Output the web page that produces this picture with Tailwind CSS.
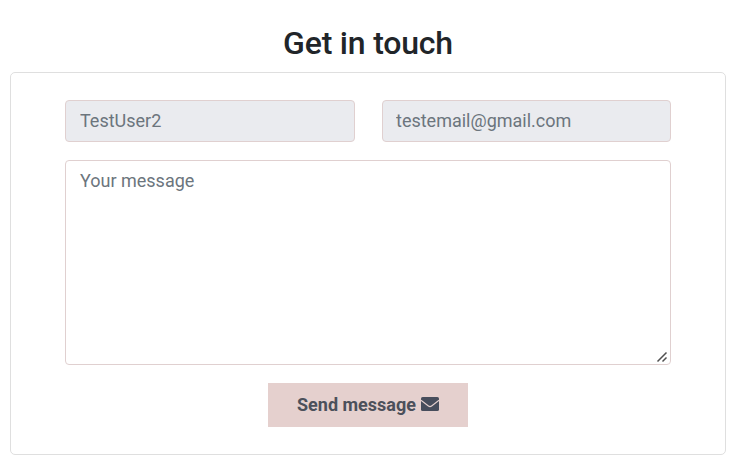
<!DOCTYPE html>
<html lang="en">
<head>
<meta charset="utf-8">
<title>Get in touch</title>
<script src="https://cdn.jsdelivr.net/npm/@tailwindcss/browser@4"></script>
</head>
<body class="bg-white font-['Roboto',sans-serif] text-[#212529] w-[733px] h-[467px] overflow-hidden">
<main class="pt-[22px] pl-[10px]">
  <h2 class="w-[716px] h-[50px] text-center text-[32px] leading-[42px] tracking-[-0.2px] font-medium">Get in touch</h2>
  <form class="w-[716px] h-[383px] border border-[#dfdfdf] rounded-[5px] px-[54px] pt-[27px] flex flex-col items-center">
    <div class="w-full grid grid-cols-[290px_289px] gap-[27px]">
      <input class="h-[42px] w-full min-w-0 rounded-[4px] border border-[#e0d0d0] bg-[#eaebef] px-[14px] pb-[2px] text-[18px] placeholder:text-[#6c757d]" placeholder="TestUser2" readonly>
      <input class="h-[42px] w-full min-w-0 rounded-[4px] border border-[#e0d0d0] bg-[#eaebef] px-[13px] pb-[2px] text-[18px] placeholder:text-[#6c757d]" placeholder="testemail@gmail.com" readonly>
    </div>
    <div class="relative mt-[18px] w-full h-[205px] shrink-0">
      <textarea class="block w-full h-full resize-none rounded-[4px] border border-[#e0d0d0] px-[14px] py-[6px] text-[18px] leading-[27px] placeholder:text-[#6c757d]" placeholder="Your message"></textarea>
      <svg class="absolute right-[3px] bottom-[2px] w-[12px] h-[12px]" viewBox="0 0 12 12" fill="none" stroke="#505050" stroke-width="1.5"><path d="M1.500 10.500 10.500 1.500M6.500 10.500 10.500 6.500"/></svg>
    </div>
    <button type="button" class="mt-[18px] w-[200px] h-[44px] pb-px shrink-0 bg-[#e5d0ce] text-[#4c505b] text-[18px] font-bold flex items-center justify-center gap-[5px]">
      <span>Send message</span>
      <svg class="w-[18px] h-[14px] mb-px" viewBox="0 0 18 14"><rect width="18" height="14" rx="1.600" fill="#474d5c"/><path d="M0 3.300 7.400 9Q9 10.200 10.600 9L18 3.300" fill="none" stroke="#e5d0ce" stroke-width="1.100"/></svg>
    </button>
  </form>
</main>
</body>
</html>
